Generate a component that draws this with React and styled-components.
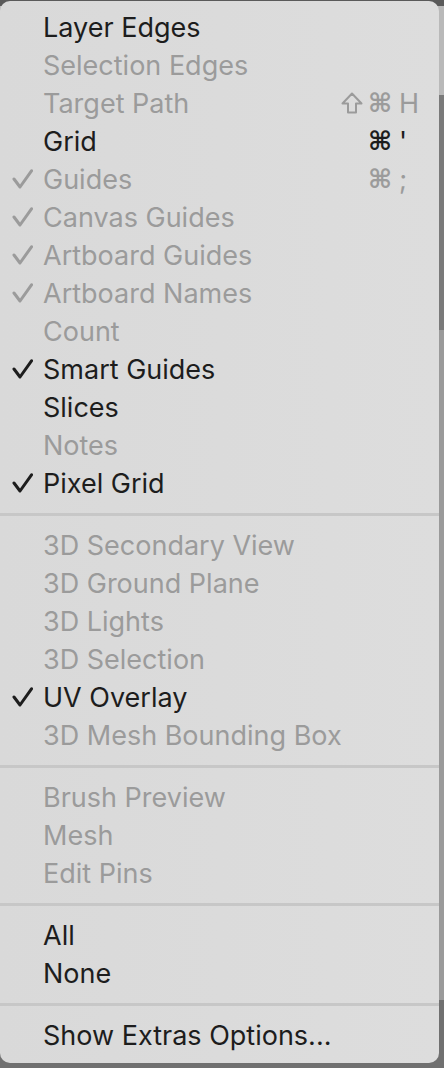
import React from "react";
import styled, { createGlobalStyle } from "styled-components";

const GlobalStyle = createGlobalStyle`
  html, body {
    margin: 0;
    padding: 0;
  }
  body {
    height: 1068px;
    overflow: hidden;
    background: linear-gradient(
      to bottom,
      #5a5a5a 0px,
      #5a5a5a 6px,
      #b9b9b9 6px,
      #b9b9b9 95px,
      #7a7a7a 95px,
      #7a7a7a 330px,
      #9a9a9a 330px,
      #9a9a9a 1000px,
      #707070 1000px
    );
    font-family: Inter, "Liberation Sans", "DejaVu Sans", sans-serif;
  }
`;

const sections = [
  [
    { label: "Layer Edges" },
    { label: "Selection Edges", disabled: true },
    { label: "Target Path", disabled: true, shift: true, mods: "⌘", key: "H" },
    { label: "Grid", mods: "⌘", key: "'" },
    { label: "Guides", disabled: true, checked: true, mods: "⌘", key: ";" },
    { label: "Canvas Guides", disabled: true, checked: true },
    { label: "Artboard Guides", disabled: true, checked: true },
    { label: "Artboard Names", disabled: true, checked: true },
    { label: "Count", disabled: true },
    { label: "Smart Guides", checked: true },
    { label: "Slices" },
    { label: "Notes", disabled: true },
    { label: "Pixel Grid", checked: true },
  ],
  [
    { label: "3D Secondary View", disabled: true },
    { label: "3D Ground Plane", disabled: true },
    { label: "3D Lights", disabled: true },
    { label: "3D Selection", disabled: true },
    { label: "UV Overlay", checked: true },
    { label: "3D Mesh Bounding Box", disabled: true },
  ],
  [
    { label: "Brush Preview", disabled: true },
    { label: "Mesh", disabled: true },
    { label: "Edit Pins", disabled: true },
  ],
  [{ label: "All" }, { label: "None" }],
  [{ label: "Show Extras Options..." }],
];

const Check = () => (
  <svg width="21" height="20" viewBox="0 0 21 20" fill="none">
    <path
      d="M2 10 L8 18 L19.5 1.8"
      stroke="currentColor"
      strokeWidth="3"
      strokeLinecap="round"
      strokeLinejoin="round"
    />
  </svg>
);

const ShiftIcon = () => (
  <svg width="22" height="22" viewBox="0 0 22 22" fill="none">
    <path
      d="M11 1.5 L20.5 11.5 L15 11.5 L15 20.5 L7 20.5 L7 11.5 L1.5 11.5 Z"
      stroke="currentColor"
      strokeWidth="2"
      strokeLinejoin="round"
    />
  </svg>
);

const App = () => (
  <>
    <GlobalStyle />
    <Menu>
      {sections.map((items, si) => (
        <React.Fragment key={si}>
          {si > 0 && <Separator />}
          {items.map((item) => (
            <Row key={item.label} $disabled={item.disabled}>
              <CheckCell>{item.checked && <Check />}</CheckCell>
              <Label>{item.label}</Label>
              {item.key && (
                <Shortcut>
                  {item.shift && <ShiftIcon />}
                  <Mods>{item.mods}</Mods>
                  <Key>{item.key}</Key>
                </Shortcut>
              )}
            </Row>
          ))}
        </React.Fragment>
      ))}
    </Menu>
  </>
);

const Menu = styled.div`
  width: 439px;
  margin-top: 1px;
  box-sizing: border-box;
  padding: 7px 0 9px;
  background: linear-gradient(to right, #d9d9d9, #dddddd);
  border-radius: 10px;
  display: flex;
  flex-direction: column;
`;

const Row = styled.div`
  height: 38px;
  display: flex;
  align-items: center;
  color: ${(p) => (p.$disabled ? "#9b9b9b" : "#1d1d1d")};
  font-size: 27px;
`;

const CheckCell = styled.div`
  width: 43px;
  flex: none;
  box-sizing: border-box;
  padding-left: 12px;
  display: flex;
  align-items: center;
`;

const Label = styled.span`
  flex: 1;
  white-space: nowrap;
`;

const Shortcut = styled.div`
  display: flex;
  align-items: center;
  gap: 5px;
  padding-right: 18px;
  font-family: "DejaVu Sans", Inter, sans-serif;
  font-size: 26px;
`;

const Mods = styled.span`
  text-align: right;
  font-weight: 600;
`;

const Key = styled.span`
  width: 22px;
  margin-left: 2px;
  font-family: Inter, "Liberation Sans", sans-serif;
  font-size: 27px;
`;

const Separator = styled.div`
  height: 3px;
  margin: 11px 0 10px;
  background: #c7c7c7;
`;

export default App;
